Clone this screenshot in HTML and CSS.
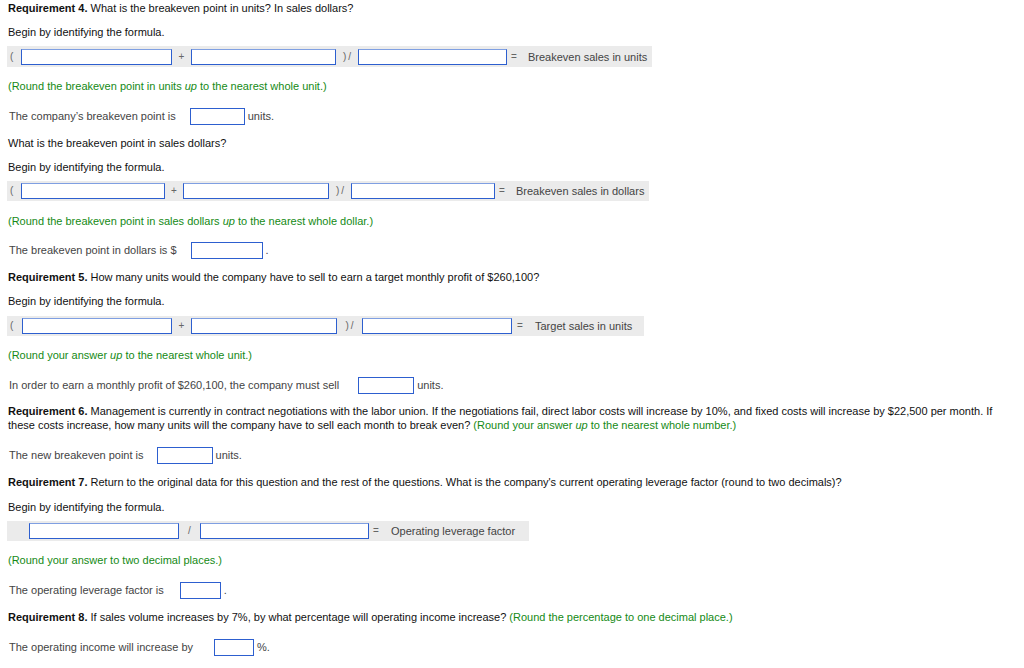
FILE: index.html
```html
<!DOCTYPE html>
<html>
<head>
<meta charset="utf-8">
<link rel="stylesheet" href="styles.css">
</head>
<body>
<div class="page">
  <p class="q t0"><b>Requirement 4.</b> What is the breakeven point in units? In sales dollars?</p>
  <p class="q t10">Begin by identifying the formula.</p>
  <div class="bar bar-h21">
    <span class="op op-lp">(</span>
    <span class="box w151"></span>
    <span class="op op-plus">+</span>
    <span class="box w145"></span>
    <span class="op op-div">)&thinsp;/</span>
    <span class="box w149"></span>
    <span class="op op-eq">=</span>
    <span class="label">Breakeven sales in units</span>
  </div>
  <p class="hint t12">(Round the breakeven point in units <i>up</i> to the nearest whole unit.)</p>
  <div class="ans t14">
    <span>The company’s breakeven point is</span>
    <span class="box w55 ml14"></span>
    <span class="after">units.</span>
  </div>
  <p class="q t11">What is the breakeven point in sales dollars?</p>
  <p class="q t10">Begin by identifying the formula.</p>
  <div class="bar">
    <span class="op op-lp">(</span>
    <span class="box w144"></span>
    <span class="op op-plus2">+</span>
    <span class="box w146"></span>
    <span class="op op-div">)&thinsp;/</span>
    <span class="box w144"></span>
    <span class="op op-eq">=</span>
    <span class="label">Breakeven sales in dollars</span>
  </div>
  <p class="hint t13">(Round the breakeven point in sales dollars <i>up</i> to the nearest whole dollar.)</p>
  <div class="ans t13">
    <span>The breakeven point in dollars is $</span>
    <span class="box w72 ml14"></span>
    <span class="after">.</span>
  </div>
  <p class="q t11"><b>Requirement 5.</b> How many units would the company have to sell to earn a target monthly profit of $260,100?</p>
  <p class="q t10">Begin by identifying the formula.</p>
  <div class="bar bar-pr12 bt8">
    <span class="op op-lp2">(</span>
    <span class="box w150"></span>
    <span class="op op-plus">+</span>
    <span class="box w146"></span>
    <span class="op op-div2">)&thinsp;/</span>
    <span class="box w150"></span>
    <span class="op op-eq2">=</span>
    <span class="label">Target sales in units</span>
  </div>
  <p class="hint t12">(Round your answer <i>up</i> to the nearest whole unit.)</p>
  <div class="ans t14">
    <span>In order to earn a monthly profit of $260,100, the company must sell</span>
    <span class="box w56 ml19"></span>
    <span class="after">units.</span>
  </div>
  <p class="q t10 wide"><b>Requirement 6.</b> Management is currently in contract negotiations with the labor union. If the negotiations fail, direct labor costs will increase by 10%, and fixed costs will increase by $22,500 per month. If these costs increase, how many units will the company have to sell each month to break even? <span class="green">(Round your answer <i>up</i> to the nearest whole number.)</span></p>
  <div class="ans t14">
    <span>The new breakeven point is</span>
    <span class="box w56 ml13"></span>
    <span class="after">units.</span>
  </div>
  <p class="q t11"><b>Requirement 7.</b> Return to the original data for this question and the rest of the questions. What is the company's current operating leverage factor (round to two decimals)?</p>
  <p class="q t11">Begin by identifying the formula.</p>
  <div class="bar bar-pr14">
    <span class="op op-lp3"></span>
    <span class="box w150"></span>
    <span class="op op-slash">/</span>
    <span class="box w169"></span>
    <span class="op op-eq3">=</span>
    <span class="label">Operating leverage factor</span>
  </div>
  <p class="hint t12">(Round your answer to two decimal places.)</p>
  <div class="ans t14">
    <span>The operating leverage factor is</span>
    <span class="box w41 ml16"></span>
    <span class="after">.</span>
  </div>
  <p class="q t11"><b>Requirement 8.</b> If sales volume increases by 7%, by what percentage will operating income increase? <span class="green">(Round the percentage to one decimal place.)</span></p>
  <div class="ans t14">
    <span>The operating income will increase by</span>
    <span class="box w40 ml21"></span>
    <span class="after">%.</span>
  </div>
</div>
</body>
</html>
```

FILE: styles.css
```css
html, body {
  margin: 0;
  padding: 0;
  background: #ffffff;
}
.page {
  font-family: "Liberation Sans", Arial, sans-serif;
  font-size: 11px;
  line-height: 14px;
  color: #111;
  padding: 1px 20px 0 8px;
}
p { margin: 0; }
b { font-weight: bold; }
.q { color: #111; }
.wide { max-width: 996px; }
.hint, .green { color: #158a15; }
.t0 { margin-top: 0; }
.t10 { margin-top: 10px; }
.t11 { margin-top: 11px; }
.t12 { margin-top: 12px; }
.t13 { margin-top: 13px; }
.t14 { margin-top: 14px; }

.bar {
  display: flex;
  width: max-content;
  align-items: center;
  height: 20px;
  margin-top: 7px;
  margin-left: -1px;
  padding: 0 5px 0 3px;
  background: #ebebeb;
  color: #555;
}
.bar.bt8 { margin-top: 8px; }
.bar-h21 { height: 21px; }
.bar-pr12 { padding-right: 12px; }
.bar-pr14 { padding-right: 14px; }

.op {
  display: inline-block;
  color: #666;
  font-size: 10px;
}
.op-lp { width: 11px; }
.op-lp2 { width: 12px; }
.op-lp3 { width: 19px; }
.op-plus { width: 19px; text-align: center; }
.op-plus2 { width: 18px; text-align: center; }
.op-div { width: 22px; text-align: center; }
.op-div2 { width: 25px; text-align: center; }
.op-slash { width: 21px; text-align: center; }
.op-eq { width: 21px; padding-left: 4px; box-sizing: border-box; }
.op-eq2 { width: 23px; padding-left: 5px; box-sizing: border-box; }
.op-eq3 { width: 22px; padding-left: 4px; box-sizing: border-box; }
.label { color: #444; }

.box {
  display: inline-block;
  box-sizing: border-box;
  height: 16px;
  background: #fff;
  border: 1px solid #2d5fcf;
  border-top-color: #7f9fe2;
}
.ans .box { height: 17px; border-top-color: #2d5fcf; }
.w40 { width: 40px; }
.w41 { width: 41px; }
.w55 { width: 55px; }
.w56 { width: 56px; }
.w72 { width: 72px; }
.w144 { width: 144px; }
.w145 { width: 145px; }
.w146 { width: 146px; }
.w149 { width: 149px; }
.w150 { width: 150px; }
.w151 { width: 151px; }
.w169 { width: 169px; }
.ml13 { margin-left: 13px; }
.ml14 { margin-left: 14px; }
.ml16 { margin-left: 16px; }
.ml19 { margin-left: 19px; }
.ml21 { margin-left: 21px; }

.ans {
  display: flex;
  align-items: center;
  height: 18px;
  padding-left: 1px;
  color: #444;
}
.after { margin-left: 3px; }
```
